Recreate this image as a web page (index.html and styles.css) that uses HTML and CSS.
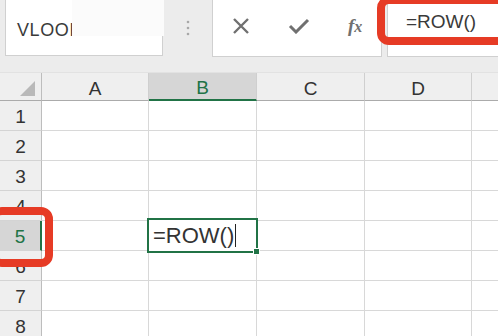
FILE: index.html
```html
<!DOCTYPE html>
<html lang="en">
<head>
    <meta charset="UTF-8">
    <title>ROW function</title>
    <link rel="stylesheet" href="styles.css">
</head>
<body>
    <div class="toolbar">
        <div class="name-box">
            <span class="name-text">VLOOKUP</span>
            <div class="name-patch"></div>
        </div>
        <div class="grip">
            <svg width="6" height="18" viewBox="0 0 6 18">
                <circle cx="3" cy="3" r="1.3" fill="#a8a8a8"/>
                <circle cx="3" cy="9" r="1.3" fill="#a8a8a8"/>
                <circle cx="3" cy="15" r="1.3" fill="#a8a8a8"/>
            </svg>
        </div>
        <div class="buttons">
            <svg class="icon" width="18" height="16" viewBox="0 0 18 16">
                <path d="M2 1 L16 15 M16 1 L2 15" stroke="#707070" stroke-width="2.4" fill="none"/>
            </svg>
            <svg class="icon" width="22" height="16" viewBox="0 0 22 16">
                <path d="M2 8 L8 14 L20 2" stroke="#707070" stroke-width="3" fill="none"/>
            </svg>
            <span class="fx">f<span class="fx-sub">x</span></span>
        </div>
        <div class="formula-box">
            <span class="formula-text">=ROW()</span>
        </div>
        <div class="mark mark-top"></div>
    </div>

    <div class="sheet">
        <div class="head corner"><div class="corner-tri"></div></div>
        <div class="head col">A</div>
        <div class="head col active-col">B</div>
        <div class="head col">C</div>
        <div class="head col">D</div>
        <div class="head col last"></div>

        <div class="head row">1</div><div class="cell"></div><div class="cell"></div><div class="cell"></div><div class="cell"></div><div class="cell last"></div>
        <div class="head row">2</div><div class="cell"></div><div class="cell"></div><div class="cell"></div><div class="cell"></div><div class="cell last"></div>
        <div class="head row">3</div><div class="cell"></div><div class="cell"></div><div class="cell"></div><div class="cell"></div><div class="cell last"></div>
        <div class="head row">4</div><div class="cell"></div><div class="cell"></div><div class="cell"></div><div class="cell"></div><div class="cell last"></div>
        <div class="head row active-row">5</div><div class="cell"></div>
        <div class="cell editing">
            <div class="active-box">
                <span class="cell-text">=ROW()</span><span class="caret"></span>
                <div class="fill-handle"></div>
            </div>
        </div>
        <div class="cell"></div><div class="cell"></div><div class="cell last"></div>
        <div class="head row">6</div><div class="cell"></div><div class="cell"></div><div class="cell"></div><div class="cell"></div><div class="cell last"></div>
        <div class="head row">7</div><div class="cell"></div><div class="cell"></div><div class="cell"></div><div class="cell"></div><div class="cell last"></div>
        <div class="head row">8</div><div class="cell"></div><div class="cell"></div><div class="cell"></div><div class="cell"></div><div class="cell last"></div>

        <div class="mark mark-left"></div>
    </div>
</body>
</html>
```

FILE: styles.css
```css
body {
    margin: 0;
    width: 498px;
    height: 336px;
    overflow: hidden;
    background-color: #ffffff;
    font-family: "Liberation Sans", Arial, sans-serif;
    color: #333;
}

/* formula bar */
.toolbar {
    position: relative;
    display: flex;
    align-items: flex-start;
    height: 73px;
    padding-left: 5px;
    box-sizing: border-box;
    background-color: #ececec;
    border-bottom: 1px solid #e2e2e2;
    overflow: hidden;
}
.name-box {
    position: relative;
    width: 158px;
    height: 56px;
    box-sizing: border-box;
    background-color: #fff;
    border: 1px solid #d0d0d0;
    border-top: none;
    padding: 20px 0 0 11px;
}
.name-text {
    font-size: 18px;
    letter-spacing: 0.6px;
    color: #3a3a3a;
}
.name-patch {
    position: absolute;
    left: 66px;
    top: 0;
    width: 92px;
    height: 36px;
    background-color: #fbfbfb;
}
.grip {
    width: 49px;
    padding-top: 19px;
    display: flex;
    justify-content: center;
}
.buttons {
    display: flex;
    align-items: center;
    width: 170px;
    height: 57px;
    box-sizing: border-box;
    background-color: #fff;
    border: 1px solid #d0d0d0;
    border-top: none;
    padding: 0 0 4px 19px;
    gap: 38px;
}
.fx {
    font-family: "Liberation Serif", "Times New Roman", serif;
    font-style: italic;
    font-weight: bold;
    font-size: 19px;
    color: #707070;
}
.fx-sub {
    font-size: 16px;
}
.formula-box {
    margin-left: 5px;
    flex: 1;
    height: 57px;
    box-sizing: border-box;
    background-color: #fff;
    border-left: 1px solid #d0d0d0;
    border-bottom: 1px solid #d0d0d0;
    padding: 11px 0 0 18px;
}
.formula-text {
    font-size: 19px;
    color: #3a3a3a;
}

/* grid */
.sheet {
    position: relative;
    display: grid;
    grid-template-columns: 42px 107px 108px 108px 107px 1fr;
    grid-template-rows: 28px repeat(8, 30px);
    overflow: hidden;
}
.head {
    background-color: #efefef;
    color: #333;
    font-size: 19px;
    display: flex;
    align-items: center;
    justify-content: center;
    box-sizing: border-box;
}
.col {
    border-right: 1px solid #cfcfcf;
    border-bottom: 1px solid #ababab;
    padding-top: 4px;
}
.col.last {
    border-right: none;
}
.corner {
    border-right: 1px solid #bdbdbd;
    border-bottom: 1px solid #ababab;
    justify-content: flex-end;
    align-items: flex-end;
    padding: 0 6px 4px 0;
}
.corner-tri {
    width: 0;
    height: 0;
    border-left: 15px solid transparent;
    border-bottom: 15px solid #b9b9b9;
}
.active-col {
    background-color: #d6d6d6;
    color: #217346;
    border-bottom: 2px solid #217346;
}
.row {
    border-right: 1px solid #bdbdbd;
    border-bottom: 1px solid #d4d4d4;
    padding-top: 2px;
}
.active-row {
    background-color: #d6d6d6;
    color: #217346;
    border-right: 2px solid #217346;
}
.cell {
    box-sizing: border-box;
    border-right: 1px solid #d8d8d8;
    border-bottom: 1px solid #d8d8d8;
}
.cell.last {
    border-right: none;
}
.editing {
    position: relative;
}
.active-box {
    position: absolute;
    left: -2px;
    top: -3px;
    right: -2px;
    bottom: -3px;
    border: 2px solid #217346;
    display: flex;
    align-items: center;
    padding-left: 4px;
    background-color: #fff;
}
.cell-text {
    font-size: 22px;
    color: #333;
}
.caret {
    width: 1px;
    height: 23px;
    background-color: #222;
    margin-left: 1px;
}
.fill-handle {
    position: absolute;
    right: -4px;
    bottom: -4px;
    width: 5px;
    height: 5px;
    background-color: #217346;
    border: 1px solid #fff;
}

/* red annotation boxes */
.mark {
    position: absolute;
    border: 8px solid #e63b25;
    border-radius: 12px;
}
.mark-top {
    left: 377px;
    top: -4px;
    width: 130px;
    height: 33px;
}
.mark-left {
    left: -10px;
    top: 134px;
    width: 47px;
    height: 44px;
}
```
